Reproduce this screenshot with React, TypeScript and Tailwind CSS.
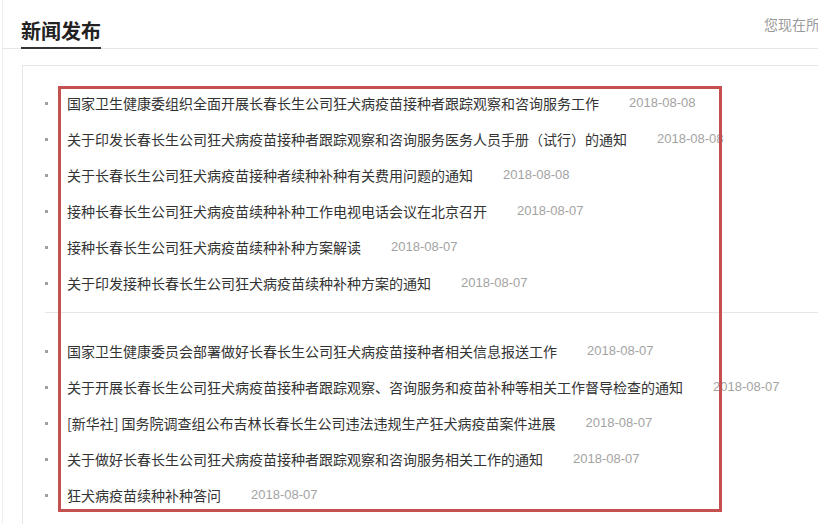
const groupA = [
  { title: "国家卫生健康委组织全面开展长春长生公司狂犬病疫苗接种者跟踪观察和咨询服务工作", date: "2018-08-08" },
  { title: "关于印发长春长生公司狂犬病疫苗接种者跟踪观察和咨询服务医务人员手册（试行）的通知", date: "2018-08-08" },
  { title: "关于长春长生公司狂犬病疫苗接种者续种补种有关费用问题的通知", date: "2018-08-08" },
  { title: "接种长春长生公司狂犬病疫苗续种补种工作电视电话会议在北京召开", date: "2018-08-07" },
  { title: "接种长春长生公司狂犬病疫苗续种补种方案解读", date: "2018-08-07" },
  { title: "关于印发接种长春长生公司狂犬病疫苗续种补种方案的通知", date: "2018-08-07" },
]

const groupB = [
  { title: "国家卫生健康委员会部署做好长春长生公司狂犬病疫苗接种者相关信息报送工作", date: "2018-08-07" },
  { title: "关于开展长春长生公司狂犬病疫苗接种者跟踪观察、咨询服务和疫苗补种等相关工作督导检查的通知", date: "2018-08-07" },
  { title: "[新华社] 国务院调查组公布吉林长春长生公司违法违规生产狂犬病疫苗案件进展", date: "2018-08-07" },
  { title: "关于做好长春长生公司狂犬病疫苗接种者跟踪观察和咨询服务相关工作的通知", date: "2018-08-07" },
  { title: "狂犬病疫苗续种补种答问", date: "2018-08-07" },
]

type Item = { title: string; date: string }

const NewsRow = ({ item }: { item: Item }) => (
  <li className="flex items-center h-[36px] whitespace-nowrap">
    <span className="w-[3px] h-[3px] bg-[#a0a0a0] shrink-0" />
    <span className="ml-[19px] text-[14px] text-[#333]">{item.title}</span>
    <span className="ml-[30px] text-[13px] text-[#a3a3a3] font-['Liberation_Sans',sans-serif]">{item.date}</span>
  </li>
)

export default function App() {
  return (
    <div className="relative w-[818px] h-[524px] overflow-hidden bg-white font-['Noto_Sans_CJK_SC','Noto_Sans',sans-serif]">
      <div className="ml-[2px] h-full border-l border-[#efefef]">
        {/* header */}
        <div className="flex items-start h-[49px] border-b border-[#e6e6e6] whitespace-nowrap">
          <h1 className="ml-[18px] mt-[18px] pb-[3px] leading-[26px] text-[20px] font-bold text-[#222] border-b-2 border-[#333]">
            新闻发布
          </h1>
          <span className="ml-[663px] mt-[14px] text-[14px] text-[#9a9a9a]">您现在所在位置：首页 &gt; 新闻发布</span>
        </div>

        {/* panel */}
        <div className="ml-[19px] mt-[16px] h-full border-l border-t border-[#e6e6e6]">
          <div className="ml-[22px] pt-[19px] pb-[11px] border-b border-[#e6e6e6]">
            <ul>
              {groupA.map((it) => (
                <NewsRow key={it.title} item={it} />
              ))}
            </ul>
          </div>
          <ul className="ml-[22px] pt-[20px]">
            {groupB.map((it) => (
              <NewsRow key={it.title} item={it} />
            ))}
          </ul>
        </div>
      </div>

      {/* annotation box */}
      <div className="absolute left-[58px] top-[86px] w-[664px] h-[426px] border-[3px] border-[#c4504f] pointer-events-none" />
    </div>
  )
}
